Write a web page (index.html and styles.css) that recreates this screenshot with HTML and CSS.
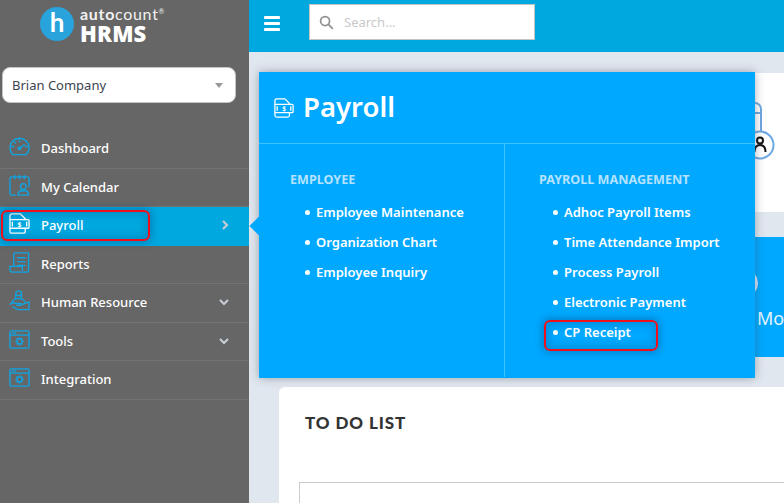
FILE: index.html
```html
<!DOCTYPE html>
<html lang="en">
<head>
<meta charset="utf-8">
<title>Payroll</title>
<link rel="stylesheet" href="styles.css">
</head>
<body>
<div class="app">
  <aside class="sidebar">
    <div class="logo">
      <span class="logo-mark">h</span>
      <div class="logo-text">
        <div class="logo-top"><b>auto</b>count<sup>®</sup></div>
        <div class="logo-hrms">HRMS</div>
      </div>
    </div>
    <div class="company"><span>Brian Company</span><i class="caret"></i></div>
    <nav class="nav">
      <a class="nav-row">
        <svg class="ico" viewBox="0 0 22 20"><path d="M4 18.500a10 10 0 1 1 14 0z"/><path d="M11 12l5-4M3 10h2M17 10h2M11 3v2M5.500 5l1.400 1.400"/><circle cx="11" cy="12" r="1.300"/></svg>
        <span class="label">Dashboard</span>
      </a>
      <a class="nav-row">
        <svg class="ico" viewBox="0 0 22 22"><path d="M7 21H3a2 2 0 0 1-2-2V4a2 2 0 0 1 2-2h16a2 2 0 0 1 2 2v8"/><path d="M6 0v4M11 0v4M16 0v4"/><circle cx="15" cy="12" r="3"/><path d="M9.500 21v-1.500a4 4 0 0 1 4-3h3a4 4 0 0 1 4 3V21z"/></svg>
        <span class="label">My Calendar</span>
      </a>
      <a class="nav-row active">
        <svg class="ico white" viewBox="0 0 22 22"><path d="M1 7V3a2 2 0 0 1 2-2h9l5 5v1M1 16v3a2 2 0 0 0 2 2h12a2 2 0 0 0 2-2v-3"/><rect x="1" y="7" width="20" height="9" rx="1"/><path d="M3.500 9.500v4M18.500 9.500v4"/><text class="bill" x="11" y="14.300" text-anchor="middle">$</text></svg>
        <span class="label">Payroll</span>
        <svg class="chev" viewBox="0 0 10 12"><path d="M3 2l4 4-4 4"/></svg>
      </a>
      <a class="nav-row">
        <svg class="ico" viewBox="0 0 22 22"><path d="M5 15V2.500A1.500 1.500 0 0 1 6.500 1h14v18a2 2 0 0 1-2 2H3a2 2 0 0 1-2-2v-4h13v4"/><path d="M9 6h8M9 10h8M9 14h8"/></svg>
        <span class="label">Reports</span>
      </a>
      <a class="nav-row">
        <svg class="ico" viewBox="0 0 22 22"><ellipse cx="10" cy="3.500" rx="3" ry="2.500"/><path d="M7 5v4M13 5v4M3 13c1-3 3-4 7-4s6 1 7 4"/><path d="M1 15c2-2 4-2 6-1h5c2 0 2 2 0 2H8M13 15.500l8-3v8H9l-5-3"/></svg>
        <span class="label">Human Resource</span>
        <svg class="chev down" viewBox="0 0 12 10"><path d="M2 3l4 4 4-4"/></svg>
      </a>
      <a class="nav-row">
        <svg class="ico" viewBox="0 0 22 20"><rect x="1" y="1" width="20" height="18" rx="1.500"/><path d="M1 5.500h20M3.500 3.200h1M6 3.200h1"/><circle cx="11" cy="12" r="2.600"/><path d="M11 8v1M11 15v1M7 12h1M14 12h1M8.200 9.200l.7.7M13.100 14.100l.7.7M13.800 9.200l-.7.7M8.900 14.100l-.7.7"/></svg>
        <span class="label">Tools</span>
        <svg class="chev down" viewBox="0 0 12 10"><path d="M2 3l4 4 4-4"/></svg>
      </a>
      <a class="nav-row">
        <svg class="ico" viewBox="0 0 22 20"><rect x="1" y="1" width="20" height="18" rx="1.500"/><path d="M1 5.500h20M3.500 3.200h1M6 3.200h1"/><circle cx="11" cy="12" r="2.600"/><path d="M11 8v1M11 15v1M7 12h1M14 12h1M8.200 9.200l.7.7M13.100 14.100l.7.7M13.800 9.200l-.7.7M8.900 14.100l-.7.7"/></svg>
        <span class="label">Integration</span>
      </a>
    </nav>
    <div class="mark mark-payroll"></div>
  </aside>

  <div class="main">
    <header class="topbar">
      <div class="burger"><i></i><i></i><i></i></div>
      <div class="search">
        <svg class="search-ico" viewBox="0 0 16 16"><circle cx="6.500" cy="6.500" r="4.800"/><path d="M10.200 10.200l4.600 4.600"/></svg>
        <span>Search...</span>
      </div>
    </header>
    <div class="content">
      <section class="card-top">
        <svg class="clip" viewBox="0 0 32 60"><path d="M3 2h8a6 6 0 0 1 6 6v22M0 12h17"/><circle cx="16" cy="44" r="13.500"/><circle cx="16" cy="39.500" r="3" class="dark"/><path d="M10.500 51c0-5 2-7 5.500-7s5.500 2 5.500 7" class="dark"/></svg>
      </section>
      <section class="card-blue"><span class="ring"></span><span class="mo">Mo</span></section>
      <section class="card-todo">
        <h2>TO DO LIST</h2>
        <div class="todo-box"></div>
      </section>
    </div>
  </div>
</div>

<div class="mega">
  <i class="mega-arrow"></i>
  <div class="mega-head">
    <svg class="mega-ico" viewBox="0 0 22 22"><path d="M1 7V3a2 2 0 0 1 2-2h9l5 5v1M1 16v3a2 2 0 0 0 2 2h12a2 2 0 0 0 2-2v-3"/><rect x="1" y="7" width="20" height="9" rx="1"/><path d="M3.500 9.500v4M18.500 9.500v4"/><text class="bill" x="11" y="14.300" text-anchor="middle">$</text></svg>
    <h1>Payroll</h1>
  </div>
  <div class="mega-body">
    <div class="mega-col first">
      <h3>EMPLOYEE</h3>
      <ul>
        <li>Employee Maintenance</li>
        <li>Organization Chart</li>
        <li>Employee Inquiry</li>
      </ul>
    </div>
    <div class="mega-col second">
      <h3>PAYROLL MANAGEMENT</h3>
      <ul>
        <li>Adhoc Payroll Items</li>
        <li>Time Attendance Import</li>
        <li>Process Payroll</li>
        <li>Electronic Payment</li>
        <li>CP Receipt</li>
      </ul>
      <div class="mark mark-cp"></div>
    </div>
  </div>
</div>
</body>
</html>
```

FILE: styles.css
```css
* { box-sizing: border-box; }
html, body { margin: 0; height: 100%; overflow: hidden; }
body { font-family: "Noto Sans", "Open Sans", sans-serif; background: #e1e7ef; position: relative; }
.app { display: flex; width: 784px; height: 503px; }

.sidebar { width: 249px; flex: none; background: #666; position: relative; }
.logo { height: 67px; display: flex; align-items: flex-start; padding: 7px 0 0 40px; gap: 6px; color: #fff; }
.logo-mark { width: 34px; height: 34px; border-radius: 50%; background: #29a3dc; color: #fff; font: 700 26px/31px "Lato", sans-serif; text-align: center; flex: none; }
.logo-top { font: 400 16px/14px "Lato", sans-serif; letter-spacing: .7px; color: #f2f2f2; }
.logo-top b { font-weight: 700; }
.logo-top sup { font-size: 7px; line-height: 0; vertical-align: 6px; letter-spacing: 0; }
.logo-hrms { margin-top: 4px; font: 800 22px/16px "Open Sans", sans-serif; letter-spacing: .2px; }

.company { margin: 0 13px 0 2px; height: 36px; background: #fff; border: 1px solid #c4c4c4; border-radius: 8px; display: flex; align-items: center; justify-content: space-between; padding: 0 12px 0 9px; font-size: 13px; color: #3c4450; }
.caret { width: 0; height: 0; border-left: 4.500px solid transparent; border-right: 4.500px solid transparent; border-top: 5px solid #999; }

.nav { margin-top: 27px; }
.nav-row { display: flex; align-items: center; height: 38.500px; padding: 0 19px 1px 9px; border-bottom: 1px solid #737373; color: #fff; font-size: 13px; font-weight: 500; }
.nav-row.active { background: #00a8e0; border-bottom-color: #00a8e0; }
.ico { width: 21px; height: 21px; flex: none; fill: none; stroke: #0ea5e5; stroke-width: 1.400; stroke-linecap: round; stroke-linejoin: round; margin-top: -3px; }
.ico.white { stroke: #fff; }
.bill { fill: #fff; stroke: none; font: 700 7px "Noto Sans", sans-serif; }
.label { margin-left: 11px; flex: 1; }
.chev { width: 10px; height: 12px; fill: none; stroke: #c6ccd2; stroke-width: 2.200; }
.chev.down { width: 12px; height: 10px; }

.mark { position: absolute; border: 2px solid #f0101c; border-radius: 6px; box-shadow: 0 0 7px 2px rgba(0, 60, 110, .35), inset 0 0 9px 2px rgba(0, 60, 110, .28); pointer-events: none; }
.mark-payroll { left: 1px; top: 210px; width: 149px; height: 31px; }
.mark-cp { left: 39px; top: 176px; width: 114px; height: 31px; }

.main { flex: 1; min-width: 0; display: flex; flex-direction: column; }
.topbar { height: 52px; background: #00a8e0; display: flex; align-items: flex-start; padding: 4px 0 0 15px; flex: none; }
.burger { width: 16px; margin-top: 12px; display: flex; flex-direction: column; gap: 3px; }
.burger i { display: block; height: 3px; background: #fff; border-radius: 1px; }
.search { margin-left: 29px; width: 226px; height: 36px; background: #fff; border: 1px solid #c4c4c4; display: flex; align-items: center; padding-left: 9px; color: #c9c9c9; font-size: 13px; gap: 10px; }
.search-ico { width: 15px; height: 15px; fill: none; stroke: #8f8f8f; stroke-width: 1.800; }

.content { flex: 1; padding: 21px 0 0 30px; min-height: 0; }
.card-top { height: 139px; background: #fff; position: relative; }
.clip { position: absolute; left: 465px; top: 28px; width: 32px; height: 60px; fill: none; stroke: #6ea9e4; stroke-width: 2; }
.clip .dark { stroke: #111; }
.card-blue { margin-top: 25px; height: 120px; background: #00a8ff; position: relative; color: #e4f4ff; font-size: 18px; }
.ring { position: absolute; left: 459px; top: 34px; width: 20px; height: 24px; border-right: 3px solid #d8e6fb; border-radius: 50%; }
.mo { position: absolute; left: 478px; top: 69px; }
.card-todo { margin-top: 30px; height: 116px; background: #fff; border-radius: 6px 0 0 0; padding: 25px 0 0 26px; position: relative; }
.card-todo h2 { margin: 0; font: 900 17px/22px "Lato", sans-serif; letter-spacing: .9px; color: #333; }
.todo-box { margin: 48px 0 0 -6px; height: 21px; border: 1px solid #ccc; border-width: 1px 0 0 1px; }

.mega { position: absolute; left: 259px; top: 72px; width: 496px; height: 306px; background: #00a8ff; color: #fff; box-shadow: 0 0 9px rgba(70, 80, 90, .45); }
.mega-arrow { position: absolute; left: -9px; top: 145px; width: 18px; height: 18px; background: #00a8ff; transform: rotate(45deg) scale(.75); }
.mega-head { height: 72px; display: flex; align-items: center; padding-left: 15px; border-bottom: 1px solid #3fc0ff; gap: 9px; }
.mega-ico { width: 20px; height: 20px; fill: none; stroke: #fff; stroke-width: 1.400; stroke-linecap: round; stroke-linejoin: round; }
.mega-head h1 { margin: -2px 0 0; font-size: 27.500px; line-height: 36px; font-weight: 600; }
.mega-body { display: flex; height: 233px; }
.mega-col { position: relative; padding-top: 26px; }
.mega-col.first { width: 246px; padding-left: 31px; border-right: 1px solid #3fc0ff; }
.mega-col.second { flex: 1; padding-left: 34px; }
.mega-col.second ul { padding-left: 25px; }
.mega-col h3 { margin: 0; font-size: 12.600px; line-height: 19px; font-weight: 700; color: #b5e3ff; }
.mega-col ul { list-style: none; margin: 15px 0 0; padding: 0 0 0 26px; font-size: 13px; font-weight: 600; }
.mega-col li { height: 30px; line-height: 17px; position: relative; }
.mega-col li::before { content: ""; position: absolute; left: -11px; top: 6px; width: 5px; height: 5px; border-radius: 50%; background: #fff; }
```
